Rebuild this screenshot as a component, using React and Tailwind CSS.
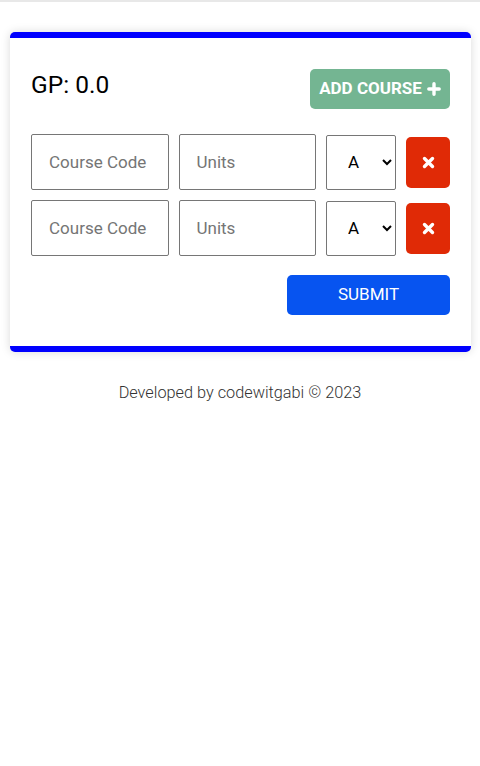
function TimesIcon() {
  return (
    <svg width="13" height="13" viewBox="0 0 13 13" fill="none">
      <path d="M2.5 2.5 L10.5 10.5 M10.5 2.5 L2.5 10.5" stroke="currentColor" strokeWidth="3.4" strokeLinecap="round" />
    </svg>
  );
}

function PlusIcon() {
  return (
    <svg width="14" height="14" viewBox="0 0 14 14" fill="none">
      <path d="M7 1.8 V12.2 M1.8 7 H12.2" stroke="currentColor" strokeWidth="3.4" strokeLinecap="round" />
    </svg>
  );
}

function CourseRow() {
  return (
    <div className="flex items-center gap-[10px]">
      <input
        type="text"
        placeholder="Course Code"
        className="h-[56px] min-w-0 flex-1 rounded-[2px] border border-[#767676] pl-[17px] text-[17px] text-black placeholder:text-[#757575] outline-none"
      />
      <input
        type="number"
        placeholder="Units"
        className="h-[56px] min-w-0 flex-1 rounded-[2px] border border-[#767676] pl-[17px] text-[17px] text-black placeholder:text-[#757575] outline-none"
      />
      <select
        defaultValue="A"
        className="h-[55px] w-[70px] rounded-[2px] border border-[#767676] bg-white pl-[17px] text-[17px] text-black"
        style={{ appearance: "auto" }}
      >
        <option>A</option>
        <option>B</option>
        <option>C</option>
        <option>D</option>
        <option>E</option>
        <option>F</option>
      </select>
      <button className="flex h-[51px] w-[44px] items-center justify-center rounded-[5px] bg-[#e02a06] text-white">
        <TimesIcon />
      </button>
    </div>
  );
}

export default function App() {
  return (
    <div className="min-h-screen bg-white font-['Roboto',sans-serif]">
      <div className="h-[2px] bg-[#e8e8e8]" />

      {/* card */}
      <div className="ml-[10px] mr-[9px] mt-[30px] rounded-[5px] border-y-[6px] border-[#0000ff] bg-white px-[21px] pb-[31px] pt-[31px] shadow-[0_0_10px_rgba(0,0,0,0.15)]">
        <div className="flex items-start justify-between">
          <h2 className="mt-[2px] text-[24.5px] leading-[28px] text-black">GP: 0.0</h2>
          <button className="flex h-[40px] w-[140px] items-center justify-center gap-[5px] rounded-[5px] bg-[#74b592] text-[17px] font-bold text-white">
            <span>ADD COURSE</span>
            <PlusIcon />
          </button>
        </div>

        <div className="mt-[25px] flex flex-col gap-[10px]">
          <CourseRow />
          <CourseRow />
        </div>

        <div className="mt-[19px] flex justify-end">
          <button className="h-[40px] w-[163px] rounded-[5px] bg-[#0754f0] text-[17px] text-white">
            SUBMIT
          </button>
        </div>
      </div>

      <p className="mt-[29px] text-center text-[16.3px] font-light leading-[24px] text-[#333]">
        Developed by codewitgabi © 2023
      </p>
    </div>
  );
}
